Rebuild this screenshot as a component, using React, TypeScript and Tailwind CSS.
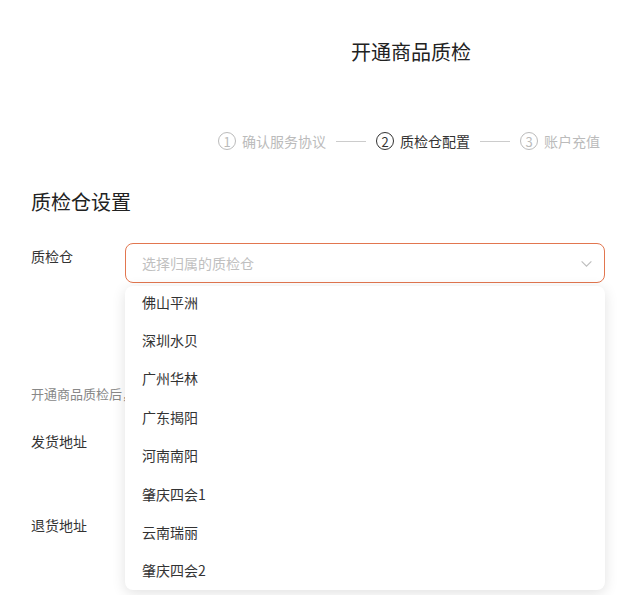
import React from "react";

const font = { fontFamily: '"Noto Sans CJK SC", "Noto Sans", sans-serif' };

function Step({ n, label, active }: { n: string; label: string; active?: boolean }) {
  return (
    <div className={`flex items-center gap-[6px] ${active ? "text-[#333333]" : "text-[#bbbbbb]"}`}>
      <span
        className={`flex h-[18px] w-[18px] items-center justify-center rounded-full border text-[13px] leading-none ${
          active ? "border-[#333333]" : "border-[#bbbbbb]"
        }`}
      >
        {n}
      </span>
      <span className="text-[14px] leading-none">{label}</span>
    </div>
  );
}

const items = ["佛山平洲", "深圳水贝", "广州华林", "广东揭阳", "河南南阳", "肇庆四会1", "云南瑞丽", "肇庆四会2"];

export default function App() {
  return (
    <div className="relative h-[595px] w-[630px] overflow-hidden bg-white" style={font}>
      <div className="pl-[192px] pt-[39px] text-center text-[20px] leading-[26px] text-[#222222]">开通商品质检</div>

      <div className="mt-[67px] flex items-center justify-end gap-[10px] pr-[30px]">
        <Step n="1" label="确认服务协议" />
        <div className="h-px w-[30px] bg-[#cccccc]" />
        <Step n="2" label="质检仓配置" active />
        <div className="h-px w-[30px] bg-[#cccccc]" />
        <Step n="3" label="账户充值" />
      </div>

      <div className="pl-[31px]">
        <div className="mt-[39px] text-[20px] leading-[26px] text-[#222222]">质检仓设置</div>

        <div className="mt-[28px] flex items-start">
          <div className="w-[94px] shrink-0 pt-[5px] text-[14px] leading-[16px] text-[#333333]">质检仓</div>
          <div className="flex h-[40px] w-[480px] shrink-0 items-center justify-between rounded-[8px] border border-[#e2764f] pl-[16px] pr-[11px]">
            <span className="text-[14px] text-[#c0c0c0]">选择归属的质检仓</span>
            <svg width="13" height="13" viewBox="0 0 12 12" fill="none">
              <path d="M1.5 4l4.5 4.5 4.5-4.5" stroke="#bdbdbd" strokeWidth="1" />
            </svg>
          </div>
        </div>

        <div className="mt-[103px] w-[94px] overflow-hidden whitespace-nowrap text-[13px] leading-[16px] text-[#888888]">
          开通商品质检后，请填写发货地址和退货地址
        </div>
        <div className="mt-[31px] text-[14px] leading-[16px] text-[#333333]">发货地址</div>
        <div className="mt-[68px] text-[14px] leading-[16px] text-[#333333]">退货地址</div>
      </div>

      <div className="absolute left-[125px] top-[286px] h-[304px] w-[480px] overflow-hidden rounded-[8px] bg-white shadow-[0_3px_14px_rgba(0,0,0,0.12)]">
        {items.map((it) => (
          <div key={it} className="flex h-[38.4px] items-center pb-[6px] pl-[17px] text-[14px] text-[#333333]">
            {it}
          </div>
        ))}
      </div>
    </div>
  );
}
